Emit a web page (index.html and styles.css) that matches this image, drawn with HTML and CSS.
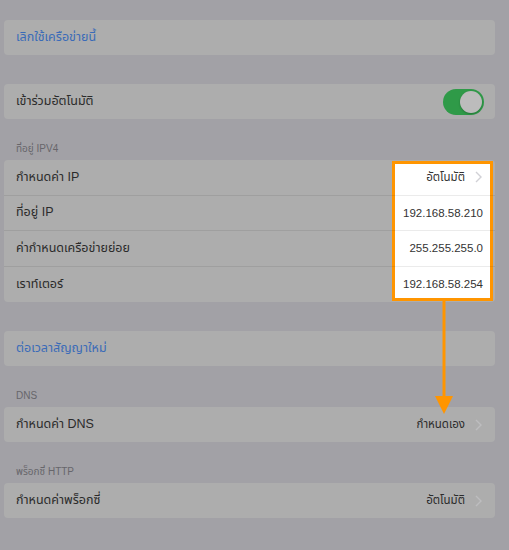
FILE: index.html
```html
<!DOCTYPE html>
<html>
  <head>
    <meta charset="utf-8" />
    <title>Wi-Fi</title>
    <link rel="stylesheet" href="styles.css">
  </head>
  <body>
    <div class="page">
      <div class="card">
        <div class="row">
          <span class="link">เลิกใช้เครือข่ายนี้</span>
        </div>
      </div>

      <div class="card card-gap">
        <div class="row">
          <span class="label">เข้าร่วมอัตโนมัติ</span>
          <span class="toggle"><span class="knob"></span></span>
        </div>
      </div>

      <div class="section-title">ที่อยู่ IPV4</div>
      <div class="card card-ipv4">
        <div class="spotlight"></div>
        <div class="row line">
          <span class="label">กำหนดค่า IP</span>
          <span class="value lit">อัตโนมัติ
            <svg class="chevron" width="7" height="12" viewBox="0 0 7 12"><path d="M1 1 L6 6 L1 11" fill="none" stroke="#d1d1d6" stroke-width="1.4" /></svg>
          </span>
        </div>
        <div class="row line">
          <span class="label">ที่อยู่ IP</span>
          <span class="value lit">192.168.58.210</span>
        </div>
        <div class="row line">
          <span class="label">ค่ากำหนดเครือข่ายย่อย</span>
          <span class="value lit">255.255.255.0</span>
        </div>
        <div class="row">
          <span class="label">เราท์เตอร์</span>
          <span class="value lit">192.168.58.254</span>
        </div>
      </div>

      <div class="card card-gap">
        <div class="row">
          <span class="link">ต่อเวลาสัญญาใหม่</span>
        </div>
      </div>

      <div class="section-title">DNS</div>
      <div class="card">
        <div class="row">
          <span class="label">กำหนดค่า DNS</span>
          <span class="value">กำหนดเอง
            <svg class="chevron" width="7" height="12" viewBox="0 0 7 12"><path d="M1 1 L6 6 L1 11" fill="none" stroke="#bdbdbf" stroke-width="1.4" /></svg>
          </span>
        </div>
      </div>

      <div class="section-title">พร็อกซี่ HTTP</div>
      <div class="card">
        <div class="row">
          <span class="label">กำหนดค่าพร็อกซี่</span>
          <span class="value">อัตโนมัติ
            <svg class="chevron" width="7" height="12" viewBox="0 0 7 12"><path d="M1 1 L6 6 L1 11" fill="none" stroke="#bdbdbf" stroke-width="1.4" /></svg>
          </span>
        </div>
      </div>

      <svg class="arrow" width="20" height="116" viewBox="0 0 20 116">
        <rect x="8.5" y="0" width="3" height="98" fill="#ff9500" />
        <polygon points="1,96 19,96 10,114" fill="#ff9500" />
      </svg>
    </div>
  </body>
</html>
```

FILE: styles.css
```css
body {
  margin: 0;
  background-color: #a2a1a6;
  font-family: "Helvetica Neue", "Liberation Sans", "Noto Sans Thai", "Noto Sans", sans-serif;
  font-size: 11.5px;
  color: #2b2b2b;
}
.page {
  position: relative;
  width: 495px;
  height: 550px;
  padding: 20px 0 0 4px;
  box-sizing: border-box;
}
.card {
  position: relative;
  background-color: #adadad;
  border-radius: 4px;
}
.card-gap {
  margin-top: 29px;
}
.row {
  position: relative;
  z-index: 2;
  display: flex;
  justify-content: space-between;
  align-items: center;
  height: 35px;
  padding: 0 12px;
}
.card-ipv4 .row {
  height: 35.5px;
}
.row.line {
  border-bottom: 1px solid rgba(0, 0, 0, 0.08);
  box-sizing: border-box;
}
.link {
  color: #3a6bb8;
  font-size: 12.5px;
}
.label {
  color: #2b2b2b;
  font-size: 12.5px;
}
.value {
  color: #2b2b2b;
  display: flex;
  align-items: center;
}
.value.lit {
  color: #333;
}
.chevron {
  margin-left: 10px;
  margin-right: 1px;
}
.section-title {
  padding: 24px 12px 5px;
  font-size: 10px;
  color: #67666b;
  line-height: 12px;
}
.toggle {
  position: relative;
  width: 41px;
  height: 26px;
  border-radius: 13px;
  background-color: #2f9a48;
  margin-right: -1px;
}
.knob {
  position: absolute;
  top: 2px;
  right: 2px;
  width: 22px;
  height: 22px;
  border-radius: 50%;
  background-color: #bcbcbc;
  box-shadow: 0 1px 2px rgba(0, 0, 0, 0.25);
}
.spotlight {
  position: absolute;
  z-index: 1;
  top: 1px;
  right: 2px;
  width: 101px;
  height: 140px;
  box-sizing: border-box;
  background-color: #fff;
  border: 3px solid #ff9500;
}
.arrow {
  position: absolute;
  left: 434px;
  top: 300px;
}
```
